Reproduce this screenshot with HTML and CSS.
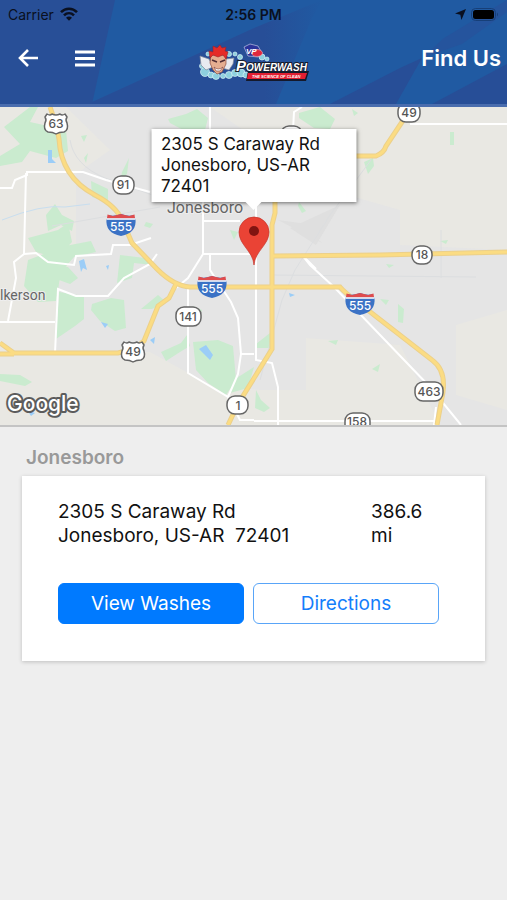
FILE: index.html
```html
<!DOCTYPE html>
<html lang="en">
<head>
<meta charset="utf-8">
<meta name="viewport" content="width=device-width, initial-scale=1">
<title>Find Us</title>
<link rel="stylesheet" href="styles.css">
</head>
<body>
<header class="header">
  <svg class="header-art" viewBox="0 0 507 104" preserveAspectRatio="none" aria-hidden="true">
    <defs>
      <linearGradient id="fade"><stop offset="0" stop-color="#274e97"/><stop offset=".75" stop-color="#274e97"/><stop offset="1" stop-color="#205aa2"/></linearGradient>
    </defs>
    <rect width="507" height="104" fill="#205aa2"/>
    <path d="M0 0H115L92 104H0Z" fill="#284f97"/>
    <path d="M92 102L254 28L322 0L312 18L276 104H92Z" fill="url(#fade)"/>
    <path d="M330 104L400 68L422 58L396 104Z" fill="#274e97"/>
    <path d="M422 58L444 38L507 0V12L462 44Z" fill="#25549d"/>
    <path d="M432 104L507 64V104Z" fill="#274e97"/>
  </svg>
  <div class="status">
    <div class="status-side">
      <span>Carrier</span>
      <svg class="wifi" viewBox="0 0 18 14" aria-hidden="true"><g fill="none" stroke="#0a1020" stroke-width="2.6"><path d="M1 5.2C5.6 .5 12.400 .5 17 5.200"/><path d="M4 8.400C6.900 5.600 11.100 5.600 14 8.400"/></g><path d="M9 13.700L6 10.700C7.700 9.200 10.300 9.200 12 10.700Z" fill="#0a1020"/></svg>
    </div>
    <time class="clock">2:56 PM</time>
    <div class="status-side status-end">
      <svg class="locate" viewBox="0 0 12 12" aria-hidden="true"><path d="M12 0L7 12L5.800 6.200L0 5Z" fill="#0a1020"/></svg>
      <svg class="battery" viewBox="0 0 28 13" aria-hidden="true"><rect x=".5" y=".5" width="24" height="12" rx="4" fill="none" stroke="#173f78"/><rect x="2" y="2" width="21" height="9" rx="2.500" fill="#000"/><path d="M26 4.500Q28 6.500 26 8.500Z" fill="#173f78"/></svg>
    </div>
  </div>
  <nav class="bar">
    <div class="bar-actions">
      <button class="icon-button" type="button" aria-label="Back"><svg viewBox="0 0 22 20" aria-hidden="true"><path d="M21 10H3M11 2L3 10L11 18" fill="none" stroke="#fff" stroke-width="2.600"/></svg></button>
      <button class="icon-button" type="button" aria-label="Menu"><svg viewBox="0 0 22 20" aria-hidden="true"><path d="M1 4H21M1 10.500H21M1 17H21" stroke="#fff" stroke-width="2.800"/></svg></button>
    </div>
    <svg class="logo" viewBox="197 42 114 40" role="img" aria-label="VP Powerwash, the science of clean">
      <g fill="#8ed0de" stroke="#d9f4f7" stroke-width=".7">
        <circle cx="202" cy="66" r="2.500"/><circle cx="205" cy="72" r="4.500"/><circle cx="211" cy="75" r="3"/><circle cx="216" cy="76" r="3.500"/><circle cx="223" cy="76" r="2.500"/><circle cx="229" cy="75" r="3.500"/><circle cx="235" cy="73" r="3.500"/><circle cx="241" cy="73" r="4"/><circle cx="246" cy="75" r="3"/><circle cx="208" cy="54" r="2"/><circle cx="229" cy="54" r="2.500"/><circle cx="235" cy="54" r="2"/><circle cx="240" cy="57" r="2.500"/><circle cx="262" cy="57" r="3"/><circle cx="267" cy="59" r="2"/>
      </g>
      <path d="M200 56L209 59L213 67L206 70L201 65ZM234 58L226 59L222 68L229 70L233 64Z" fill="#e8eaf0" stroke="#7e8798" stroke-width=".7"/>
      <path d="M211 55L226 55L226 64L222 72L217 74L213 70L210 63Z" fill="#e5ae91" stroke="#8d4b3c" stroke-width=".7"/>
      <path d="M210 58L209 51L213 52L213 46L217 48L220 45L222 48L226 47L225 51L228 52L226 59L223 55L218 57L213 55Z" fill="#e52b28" stroke="#99212b" stroke-width=".6"/>
      <path d="M212 60L217 62M225 60L220 62" stroke="#512d33" stroke-width="1.400"/><path d="M214 67Q218 71 223 67L220 71H216Z" fill="#fff" stroke="#793a38" stroke-width=".6"/>
      <path d="M244 47L250 44L258 46L262 53L258 57L248 56Z" fill="#2a339a" stroke="#d7d9f0" stroke-width=".6"/>
      <ellipse cx="257" cy="53" rx="5.500" ry="3.500" fill="#e0283e" stroke="#f0c6d1" stroke-width=".5"/>
      <text x="246" y="54" class="logo-vp">VP</text>
      <path d="M248 71H309L306 81H246Z" fill="#15192b"/>
      <path d="M248 73H307L305 79H247Z" fill="#e21e32"/>
      <text x="236" y="71" class="logo-name"><tspan class="logo-cap">P</tspan>OWERWASH</text>
      <text x="252" y="78" class="logo-tag">THE SCIENCE OF CLEAN</text>
    </svg>
    <h1 class="title">Find Us</h1>
  </nav>
</header>
<main>
  <section class="map" aria-label="Map">
    <svg class="map-art" viewBox="0 107 507 318" aria-hidden="true">
      <defs>
        <g id="interstate"><path d="M-14.500 -6Q-12.500 -8 -12.500 -10Q-8 -8 0 -11Q8 -8 12.500 -10Q12.500 -8 14.500 -6Q16 8 0 11Q-16 8 -14.500 -6Z" fill="#3b72c5"/><path d="M-13.500 -10.500L-8 -9L0 -11L8 -9L13.500 -10.500L14 -6.500H-14Z" fill="#df4c4d"/><path d="M-14.500 -6H14.500" stroke="#fff" stroke-width="1.500"/><text class="route route-light" y="6">555</text></g>
        <path id="us-shield" d="M-9 -10Q-6 -8 -4 -10Q0 -8 4 -10Q6 -8 9 -10L11 -7Q9 -4 11 -1Q13 6 8 8Q3 8 0 10Q-3 8 -8 8Q-13 6 -11 -1Q-9 -4 -11 -7Z" fill="#fff" stroke="#666" stroke-width="1.500" stroke-linejoin="round"/>
      </defs>
      <rect y="107" width="507" height="318" fill="#e9e8e3"/>
      <path d="M66 107H210L330 190L400 210V245L507 250V310L456 325V395L507 410V425H440L400 345L306 338V390H260L210 385L150 352H56V290L76 252V174L110 150Z" fill="#e5e5e5"/>
      <path d="M290 228L340 205L316 245ZM278 220L300 223L322 243Z" fill="#dfdfdf"/>
      <g fill="#caebcf">
        <path d="M4 127L30 107H38L30 122L66 130L68 151L56 158L30 151L22 162L0 166V156L20 144Z"/>
        <path d="M168 119L186 114L197 109L208 118L205 130L187 132L170 123Z"/><path d="M81 136L87 135L84 142ZM84 158L88 153L86 163Z"/>
        <path d="M122 172L129 158L127 174L121 178ZM91 181L108 189V202L92 197Z"/>
        <path d="M46 215L55 204L62 215L74 221L72 231L61 225L48 231ZM28 238L58 230L68 223L72 242L57 258L36 252ZM28 260L65 246L91 241L96 252L74 257L61 272L56 301L38 302L24 286Z"/>
        <path d="M50 262L68 267L78 278L70 284L59 280ZM59 292L84 296V319L75 326L56 339ZM92 304L111 298L124 300L126 328L115 331L100 321L91 310Z"/>
        <path d="M120 255L145 258L153 265L134 263L132 278L117 283ZM141 309L158 295L166 302L152 309ZM146 222L153 224L150 228L144 226Z"/>
        <path d="M161 352L181 343L187 335L190 346L180 352L166 361ZM193 306L202 310L199 318L193 312ZM193 342L218 340L233 346L236 380L226 395L208 383L196 370ZM232 381L254 367L248 388L230 393ZM0 374L20 375L32 382L25 386L0 381Z"/>
        <path d="M299 113L320 107L335 119L330 129L314 128L299 118ZM352 109L358 113L354 116ZM364 162L373 158L374 166L368 174ZM450 132H454V145H450ZM299 202L306 211L302 213L298 206ZM440 241L448 240L446 244ZM230 230L238 232L234 240ZM386 264L394 265L389 268ZM380 299L389 300L386 305ZM398 304L404 309L403 323L398 322ZM328 341L338 340L336 345ZM372 369L380 364L378 372ZM256 344L270 333V348H256ZM256 390L261 400L270 408L264 412L255 408ZM409 340L413 344L410 345Z"/>
      </g>
      <path d="M48 150H52V159L56 163H48ZM79 261L84 259L87 270L83 268L81 272ZM106 266L109 265L108 270ZM101 322L108 324L105 328ZM150 340L155 337L154 344ZM199 349L206 345L213 355L210 360L204 354ZM289 293L295 295L290 297ZM27 410L35 413L31 416Z" fill="#9bcdf7"/>
      <path d="M2 220Q42 204 65 207L90 204" fill="none" stroke="#c8deef"/>
      <path d="M70 140Q74 165 105 178L180 205L205 216M52 226L160 207M371 160L330 215L295 270L282 300L260 380M270 275L476 277M441 230V278" fill="none" stroke="#dcdee0"/>
      <path d="M0 188H12L15 180L27 175V172H83L106 180L150 192M26 173L24 254L14 262L16 278L8 321M24 254L36 253L48 262L74 265L76 256L111 254L113 245H130L151 238M0 322H55M55 353L58 289L76 296L108 296L124 278L150 264L157 254M203 201V254L188 278L176 288M203 221H240M203 254H254M188 288V373L228 397L240 420H254M210 107V130M210 254V270L231 302L238 318L241 354L238 374L228 397M241 354H254M256 170V360L272 363L278 387V425M293 130L294 112L302 107M276 255H302L310 265L334 287L430 387L461 425M410 124H507M304 257L316 269M254 421H435M436 407L434 425" fill="none" stroke="#fff" stroke-width="2"/>
      <path d="M50 107Q57 126 59 139Q61 177 95 195Q116 206 122 220L132 243L157 269Q174 286 190 287H340Q344 292 360 304L432 360Q446 370 443 392L437 425M275 195V213L272 225V349L238 404L228 425M0 343L14 353H118L134 349L144 341L158 306L169 298L176 284M0 354H14M273 256L380 255L507 252M350 156H376Q384 153 386 146L406 116" fill="none" stroke="#ecd08a" stroke-width="5"/>
      <path d="M50 107Q57 126 59 139Q61 177 95 195Q116 206 122 220L132 243L157 269Q174 286 190 287H340Q344 292 360 304L432 360Q446 370 443 392L437 425M275 195V213L272 225V349L238 404L228 425M0 343L14 353H118L134 349L144 341L158 306L169 298L176 284M0 354H14M273 256L380 255L507 252M350 156H376Q384 153 386 146L406 116" fill="none" stroke="#fbdc83" stroke-width="3"/>
      <use href="#us-shield" x="56" y="124"/><use href="#us-shield" x="133" y="352"/>
      <use href="#interstate" x="121" y="225"/><use href="#interstate" x="212" y="287"/><use href="#interstate" x="360" y="304"/>
      <g fill="#fff" stroke="#666" stroke-width="1.500">
        <rect x="113" y="176" width="21" height="18" rx="8"/><rect x="398" y="103" width="22" height="19" rx="8"/><rect x="412" y="246" width="20" height="18" rx="8"/><rect x="176" y="307" width="25" height="19" rx="8"/><rect x="227" y="396" width="21" height="18" rx="8"/><rect x="415" y="382" width="28" height="19" rx="8"/><rect x="345" y="413" width="25" height="19" rx="8"/><rect x="281" y="126" width="21" height="18" rx="8"/>
      </g>
      <g class="route"><text x="56" y="128">63</text><text x="133" y="356">49</text><text x="123" y="189">91</text><text x="409" y="117">49</text><text x="422" y="259">18</text><text x="188" y="321">141</text><text x="238" y="410">1</text><text x="429" y="396">463</text><text x="357" y="426">158</text></g>
      <text x="167" y="213" class="place">Jonesboro</text>
      <text x="0" y="300" class="place place-small">lkerson</text>
      <text x="7" y="411" class="google">Google</text>
      <path d="M254 265C253 251 239 245 239 232A15 15 0 0 1 269 232C269 245 255 251 254 265Z" fill="#ea4335" stroke="#c53429" stroke-width=".7"/><circle cx="254" cy="231" r="5" fill="#811411"/>
    </svg>
    <p class="callout">2305 S Caraway Rd<br>Jonesboro, US-AR<br>72401</p>
  </section>
  <section class="locations">
    <h2 class="city">Jonesboro</h2>
    <article class="card">
      <div class="card-info">
        <address class="address">2305 S Caraway Rd<br>Jonesboro, US-AR&nbsp; 72401</address>
        <p class="distance">386.6<br>mi</p>
      </div>
      <div class="card-actions">
        <button class="button button-solid" type="button">View Washes</button>
        <button class="button" type="button">Directions</button>
      </div>
    </article>
  </section>
</main>
</body>
</html>
```
FILE: styles.css
```css
* { box-sizing: border-box; }
body { margin: 0; min-height: 100vh; background: #eee; color: #111; font-family: Inter, "Liberation Sans", sans-serif; }
h1, h2, p { margin: 0; }
svg { display: block; }

.header { position: relative; border-bottom: 3px solid #4a6dae; }
.header-art { position: absolute; inset: 0; width: 100%; height: 100%; }
.status { position: relative; display: grid; grid-template-columns: 1fr auto 1fr; align-items: center; height: 28px; padding: 0 8px; color: #0a1020; font-size: 14px; }
.status-side { display: flex; align-items: center; gap: 6px; }
.status-end { justify-content: flex-end; gap: 5px; }
.clock { font-weight: 600; }
.wifi { width: 18px; height: 14px; }
.locate { width: 11px; height: 11px; }
.battery { width: 28px; height: 13px; }
.bar { position: relative; display: grid; grid-template-columns: 1fr 114px 1fr; align-items: center; height: 76px; padding: 0 6px 16px; }
.bar-actions { display: flex; gap: 35px; padding-left: 11px; }
.icon-button { width: 22px; height: 20px; padding: 0; border: 0; background: none; }
.logo { width: 114px; height: 40px; margin-top: 8px; }
.logo-vp { font: italic 900 8px "Liberation Sans", sans-serif; fill: #fff; }
.logo-name { font: italic 700 10px "Liberation Sans", sans-serif; fill: #fff; stroke: #171b2b; stroke-width: 2px; paint-order: stroke; }
.logo-cap { font-size: 15px; }
.logo-tag { font: italic 700 4px "Liberation Sans", sans-serif; fill: #fff; }
.title { justify-self: end; color: #fff; font-size: 22px; font-weight: 600; line-height: 28px; }

.map { position: relative; border-bottom: 2px solid #c4c4c4; }
.map-art { width: 100%; height: auto; }
.route { font: 500 12px Inter, sans-serif; fill: #555; text-anchor: middle; }
.route-light { fill: #fff; }
.place { font: 16px Roboto, sans-serif; fill: #666; stroke: #eee; stroke-width: 2px; paint-order: stroke; }
.place-small { font-size: 14px; }
.google { font: 500 21px Inter, sans-serif; fill: #fff; stroke: #5c5c5c; stroke-width: 4px; stroke-linejoin: round; paint-order: stroke; }
.callout { position: absolute; left: 50%; bottom: 70%; width: 205px; padding: 5px 10px; transform: translateX(-50%); background: #fff; box-shadow: 0 1px 4px #0008; font-size: 17px; line-height: 21px; }
.callout::after { content: ""; position: absolute; top: 100%; left: 50%; border: solid transparent; border-width: 8px 8px 0; border-top-color: #fff; transform: translateX(-50%); }

.locations { padding: 17px 22px; }
.city { padding: 0 4px; color: #999; font-size: 19px; font-weight: 600; line-height: 28px; }
.card { margin-top: 4px; padding: 24px 46px 37px 36px; background: #fff; box-shadow: 0 1px 4px #0003; }
.card-info { display: flex; justify-content: space-between; font-size: 19px; line-height: 24px; }
.address { font-style: normal; }
.distance { width: 68px; }
.card-actions { display: grid; grid-template-columns: 1fr 1fr; gap: 9px; margin-top: 35px; }
.button { height: 41px; padding: 0; border: 1px solid #59a5f8; border-radius: 6px; background: #fff; color: #147efb; font: 19px Inter, sans-serif; }
.button-solid { border-color: #007aff; background: #007aff; color: #fff; }
```
